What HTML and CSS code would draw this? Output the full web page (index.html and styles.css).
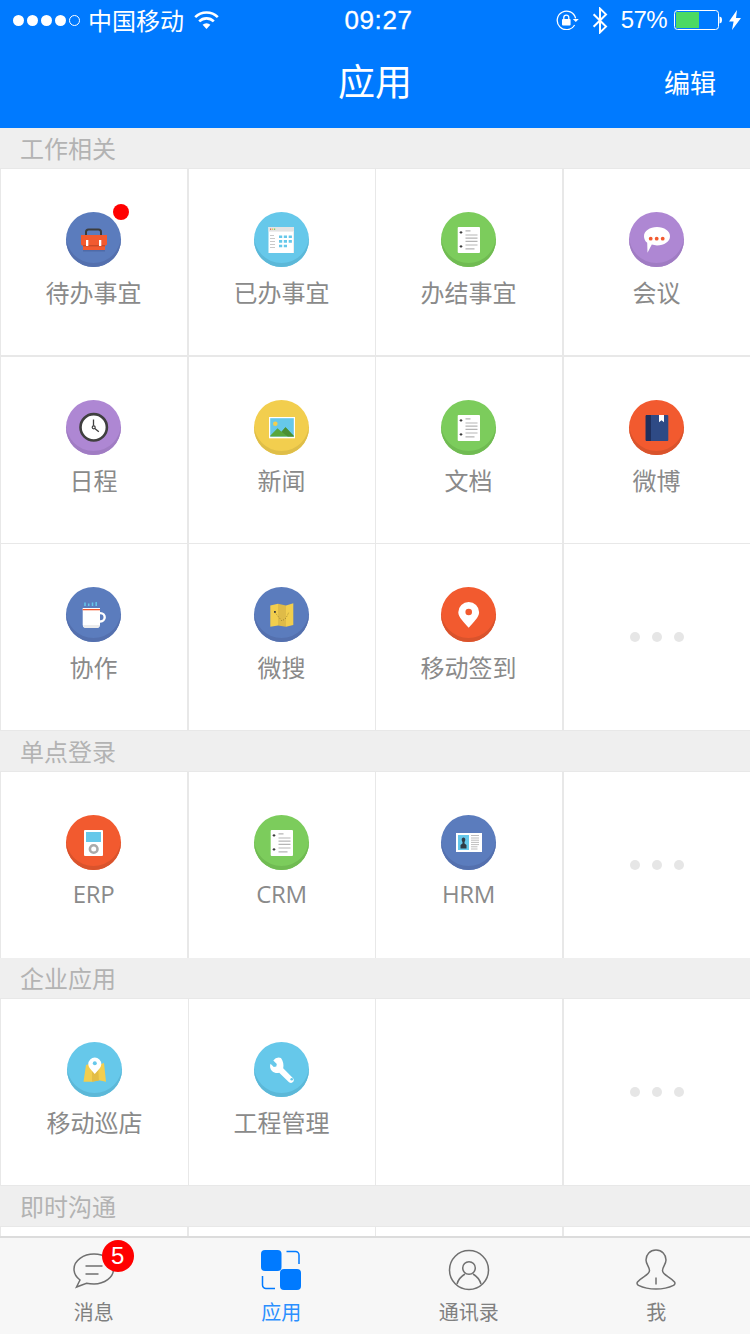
FILE: index.html
```html
<!DOCTYPE html>
<html lang="zh">
<head>
<meta charset="UTF-8">
<title>应用</title>
<link rel="stylesheet" href="styles.css">
</head>
<body>
<svg class="defs">
	<symbol id="doc" viewBox="0 0 55 55">
		<rect x="16.7" y="15" width="22.3" height="26" rx="1" fill="#fff"/>
		<path d="M24.5 18.8h5M24.5 23h12M24.5 26.2h12M24.5 29.4h12M24.5 33h12M24.5 36.8h9" stroke="#b5b5b5" stroke-width="1.2"/>
		<path d="M18.6 20.4h2.8M20 19v2.8M18.6 34.4h2.8M20 33v2.8" stroke="#333" stroke-width="1"/>
	</symbol>
</svg>

<div class="page">
	<header class="topbar">
		<div class="status">
			<div class="status-left">
				<span class="signal"><i></i><i></i><i></i><i></i><i class="off"></i></span>
				<span class="carrier">中国移动</span>
				<svg class="wifi" width="25" height="20" viewBox="0 0 25 20" fill="none" stroke="#fff" stroke-width="2.6">
					<path d="M1.2 7.2a16 16 0 0 1 22.6 0"/>
					<path d="M5.2 11.4a10.4 10.4 0 0 1 14.6 0"/>
					<path d="M12.5 19 8.6 14.8a5.4 5.4 0 0 1 7.8 0z" fill="#fff" stroke="none"/>
				</svg>
			</div>
			<div class="time">09:27</div>
			<div class="status-right">
				<svg class="lock" width="23" height="20" viewBox="0 0 23 20" fill="none" stroke="#fff" stroke-width="1.3">
					<path d="M19.6 8.4A9.3 9.3 0 1 0 18.6 15"/>
					<path d="M16.8 9h6l-3 3z" fill="#fff" stroke="none"/>
					<rect x="6" y="9" width="8.6" height="6.6" rx="1" fill="#fff" stroke="none"/>
					<path d="M7.8 9.4V7.6a2.5 2.5 0 0 1 5 0v1.8"/>
				</svg>
				<svg class="bluetooth" width="16" height="27" viewBox="0 0 16 27" fill="none" stroke="#fff" stroke-width="2">
					<path d="M1.6 7.2 14 19.6 8 25.4V1.6l6 5.800L1.6 19.800"/>
				</svg>
				<span class="percent">57%</span>
				<svg class="battery" width="49" height="20" viewBox="0 0 49 20">
					<rect x="0.5" y="0.5" width="44" height="19" rx="3" fill="none" stroke="#fff"/>
					<rect x="2" y="2" width="23" height="16" fill="#4cd964"/>
					<path d="M45.500 6.500c1.800.3 2.500 1.500 2.500 3.500s-.7 3.200-2.500 3.500z" fill="#fff"/>
				</svg>
				<svg class="bolt" width="12" height="20" viewBox="0 0 12 20">
					<path d="M8 0 0 11.400h4.600L3 20l9-12H7z" fill="#fff"/>
				</svg>
			</div>
		</div>
		<nav class="navbar">
			<span></span>
			<h1 class="nav-title">应用</h1>
			<a class="nav-edit">编辑</a>
		</nav>
	</header>

	<main class="content">
		<div class="section-title">工作相关</div>
		<div class="row">
			<div class="cell">
				<div class="disc disc-blue">
					<span class="red-dot"></span>
					<svg class="glyph" viewBox="0 0 55 55">
						<path d="M20 23.500v-3.500a2.500 2.500 0 0 1 2.500-2.500h10a2.500 2.500 0 0 1 2.500 2.500v3.500" fill="none" stroke="#3c3c3c" stroke-width="2"/>
						<rect x="17" y="35" width="22" height="4.500" fill="#4f6aa8"/>
						<rect x="17" y="33" width="22" height="5" fill="#f25a2f"/>
						<path d="M15 23h26v9.500l-2 1.500H17l-2-1.500z" fill="#f25a2f"/>
						<rect x="17" y="33" width="22" height="1.400" fill="#c94a26"/>
						<rect x="20" y="28" width="2.300" height="6" fill="#fff"/>
						<rect x="33" y="28" width="2.300" height="6" fill="#fff"/>
					</svg>
				</div>
				<span class="cell-label">待办事宜</span>
			</div>
			<div class="cell">
				<div class="disc disc-teal">
					<svg class="glyph" viewBox="0 0 55 55">
						<rect x="14.500" y="15" width="25.500" height="26" fill="#fff"/>
						<rect x="14.500" y="15" width="25.500" height="4.600" fill="#e3e3e3"/>
						<rect x="39" y="19" width="1" height="22" fill="#eee"/>
						<rect x="16" y="16.500" width="1.200" height="1.400" fill="#e2664a"/>
						<rect x="18" y="16.500" width="1.200" height="1.400" fill="#e8c24a"/>
						<rect x="20" y="16.500" width="1.200" height="1.400" fill="#7ccc5c"/>
						<path d="M16 23.500h4M16 26.500h5M16 29.500h5M16 32.500h5M16 35.500h5" stroke="#c9c9c9" stroke-width="1"/>
						<path d="M25 24.800h3.200M29.800 24.800h3.200M34.700 24.800h3.200M25 29.400h3.200M29.800 29.400h3.200M34.700 29.400h3.200M25 34h3.200M29.800 34h3.200" stroke="#66c8ea" stroke-width="2.600"/>
					</svg>
				</div>
				<span class="cell-label">已办事宜</span>
			</div>
			<div class="cell">
				<div class="disc disc-green">
					<svg class="glyph"><use href="#doc"/></svg>
				</div>
				<span class="cell-label">办结事宜</span>
			</div>
			<div class="cell">
				<div class="disc disc-purple">
					<svg class="glyph" viewBox="0 0 55 55">
						<path d="M28 15c7.200 0 13 4 13 9.200S35.200 33.400 28 33.400c-2 0-3.500-.3-5.200-.8L18.500 40.700 18.200 30.800C16 29 15 26.800 15 24.200 15 19 20.800 15 28 15z" fill="#fff"/>
						<circle cx="21.700" cy="26.700" r="1.900" fill="#f25a2f"/>
						<circle cx="27.700" cy="26.700" r="1.900" fill="#f25a2f"/>
						<circle cx="33.700" cy="26.700" r="1.900" fill="#f25a2f"/>
					</svg>
				</div>
				<span class="cell-label">会议</span>
			</div>
		</div>
		<div class="row row-thick">
			<div class="cell">
				<div class="disc disc-purple">
					<svg class="glyph" viewBox="0 0 55 55">
						<circle cx="27.700" cy="27.300" r="13.200" fill="#fff" stroke="#3f3f3f" stroke-width="2.600"/>
						<path d="M27.500 19.500v6.200M28.800 28.400l4 3.400" stroke="#3f3f3f" stroke-width="1.300" fill="none"/>
						<circle cx="27.700" cy="27.300" r="1.500" fill="none" stroke="#3f3f3f" stroke-width="1.200"/>
					</svg>
				</div>
				<span class="cell-label">日程</span>
			</div>
			<div class="cell">
				<div class="disc disc-yellow">
					<svg class="glyph" viewBox="0 0 55 55">
						<rect x="15" y="17" width="26" height="21.300" fill="#fff"/>
						<rect x="16.200" y="18.200" width="23.600" height="18.400" fill="#66c8ea"/>
						<circle cx="21.300" cy="23.700" r="2.300" fill="#f2ce4e"/>
						<path d="M16.200 36.600v-.8l7.300-7.600 4 3.500 4-4.500 8.300 8.800v.6z" fill="#58a63c"/>
						<path d="M27.500 31.700l4-4.500 8.300 8.800v.6h-6z" fill="#4a8f33"/>
					</svg>
				</div>
				<span class="cell-label">新闻</span>
			</div>
			<div class="cell">
				<div class="disc disc-green">
					<svg class="glyph"><use href="#doc"/></svg>
				</div>
				<span class="cell-label">文档</span>
			</div>
			<div class="cell">
				<div class="disc disc-orange">
					<svg class="glyph" viewBox="0 0 55 55">
						<rect x="16.700" y="15" width="22.600" height="26" rx="1" fill="#2e4a85"/>
						<path d="M17.700 15h4.300v26h-4.300a1 1 0 0 1-1-1V16a1 1 0 0 1 1-1z" fill="#1f2f5c"/>
						<path d="M30 15h5v7.300l-2.500-2-2.500 2z" fill="#fff"/>
					</svg>
				</div>
				<span class="cell-label">微博</span>
			</div>
		</div>
		<div class="row row-last">
			<div class="cell">
				<div class="disc disc-blue">
					<svg class="glyph" viewBox="0 0 55 55">
						<path d="M19 15.500v3.500M22.700 16.500v2.500M26.500 15.500v3.500M30.200 15v4" stroke="#66c8ea" stroke-width="1.500"/>
						<circle cx="34.500" cy="30.300" r="4.200" fill="none" stroke="#fff" stroke-width="2.400"/>
						<path d="M16.700 21h17.300v16.500a3.500 3.500 0 0 1-3.500 3.500H20.200a3.500 3.500 0 0 1-3.500-3.500z" fill="#fff"/>
						<path d="M16.700 38h17.300l-.3 0a3.500 3.500 0 0 1-3.200 3H20.200a3.500 3.500 0 0 1-3.200-3z" fill="#ececec"/>
						<rect x="16.700" y="22" width="17.300" height="1.300" fill="#f25a2f"/>
					</svg>
				</div>
				<span class="cell-label">协作</span>
			</div>
			<div class="cell">
				<div class="disc disc-blue">
					<svg class="glyph" viewBox="0 0 55 55">
						<path d="M16.300 18.500 24 16.800v21.700l-7.700 1.200z" fill="#f2ce4e"/>
						<path d="M24 16.800l8 1.700v21.200l-8-1.200z" fill="#dfbb48"/>
						<path d="M32 18.500l7.300-2.200v21.700L32 39.700z" fill="#f2ce4e"/>
						<path d="M21 25.500l4 5 3 3.500 4-3 3-6" fill="none" stroke="#8a7428" stroke-width=".8" stroke-dasharray="1 1.500"/>
						<rect x="20" y="24" width="1.800" height="1.800" fill="#3c3c3c"/>
					</svg>
				</div>
				<span class="cell-label">微搜</span>
			</div>
			<div class="cell">
				<div class="disc disc-orange">
					<svg class="glyph" viewBox="0 0 55 55">
						<path d="M27.700 40.700C23 35 17.300 30.500 17.300 25.200a10.400 10.200 0 0 1 20.800 0c0 5.300-5.700 9.800-10.400 15.500z" fill="#fff"/>
						<circle cx="27.700" cy="25" r="3.300" fill="#f25a2f"/>
					</svg>
				</div>
				<span class="cell-label">移动签到</span>
			</div>
			<div class="cell cell-more"><i></i><i></i><i></i></div>
		</div>

		<div class="section-title">单点登录</div>
		<div class="row">
			<div class="cell">
				<div class="disc disc-orange">
					<svg class="glyph" viewBox="0 0 55 55">
						<rect x="18" y="15" width="19" height="26" rx="1" fill="#fff"/>
						<rect x="20" y="17" width="15" height="10" fill="#66c8ea"/>
						<circle cx="27.700" cy="34" r="3.800" fill="#fff" stroke="#aaa" stroke-width="2.600"/>
					</svg>
				</div>
				<span class="cell-label cell-label-latin">ERP</span>
			</div>
			<div class="cell">
				<div class="disc disc-green">
					<svg class="glyph"><use href="#doc"/></svg>
				</div>
				<span class="cell-label cell-label-latin">CRM</span>
			</div>
			<div class="cell">
				<div class="disc disc-blue">
					<svg class="glyph" viewBox="0 0 55 55">
						<rect x="15" y="18" width="26" height="19" fill="#fff"/>
						<rect x="17" y="20" width="11" height="15" fill="#66c8ea"/>
						<path d="M22.500 22.500c1.200 0 1.800 1 1.800 2.200 0 1-.4 1.700-.8 2.200v1.600l2 1.500v3.500h-6v-3.500l2-1.500v-1.600c-.4-.5-.8-1.200-.8-2.200 0-1.200.6-2.200 1.800-2.200z" fill="#2f3b45"/>
						<path d="M30 20.500h8M30 23h8M30 25.200h8M30 27.400h8M30 29.600h8M30 31.800h6.500M30 34h6.500" stroke="#bdbdbd" stroke-width="1"/>
					</svg>
				</div>
				<span class="cell-label cell-label-latin">HRM</span>
			</div>
			<div class="cell cell-more"><i></i><i></i><i></i></div>
		</div>

		<div class="section-title">企业应用</div>
		<div class="row row-wide row-last">
			<div class="cell">
				<div class="disc disc-teal">
					<svg class="glyph" viewBox="0 0 55 55">
						<path d="M16.500 39.700 19 23l6-2 6 2 6-2 2 18.700-7-1.500-7 1.500z" fill="#f2ce4e"/>
						<path d="M25 21l6 2 1 15.500-7 1.200z" fill="#e3bd45"/>
						<path d="M27.800 32c-2.800-3.400-6.500-6.300-6.500-10a6.500 6.500 0 0 1 13 0c0 3.700-3.700 6.600-6.500 10z" fill="#fff"/>
						<circle cx="27.800" cy="21.300" r="2" fill="#66c8ea"/>
					</svg>
				</div>
				<span class="cell-label">移动巡店</span>
			</div>
			<div class="cell">
				<div class="disc disc-teal">
					<svg class="glyph" viewBox="0 0 55 55">
						<path d="M25.500 16.500a7 7 0 0 0-7.700 2.600l3.500 3.400-.5 2.500-2.500.5-3.300-3.300a7.400 7.400 0 0 0 1.500 7.300c2.300 2.100 5 2.400 7.200 1.700l9.800 9.500c1.500 1 3 .9 4-.1s1.100-2.600.1-3.900l-9.900-9.900c.8-3.400 0-7-2.200-10.300z" fill="#fff" transform="translate(1.500 -.5)"/>
						<circle cx="37.700" cy="37.300" r="1.300" fill="#66c8ea"/>
					</svg>
				</div>
				<span class="cell-label">工程管理</span>
			</div>
			<div class="cell"></div>
			<div class="cell cell-more"><i></i><i></i><i></i></div>
		</div>

		<div class="section-title">即时沟通</div>
		<div class="row">
			<div class="cell"></div>
			<div class="cell"></div>
			<div class="cell"></div>
			<div class="cell"></div>
		</div>
	</main>

	<footer class="tabbar">
		<div class="tab">
			<div class="tab-icon">
				<svg width="42" height="42" viewBox="0 0 42 42" fill="none" stroke="#707070" stroke-width="1.500">
					<path d="M21 5C10.500 5 1 11.500 1 20c0 4.500 2.400 8.300 6 11L3.500 38l10-3.800c2 .5 5 .8 7.500.8 10.500 0 19.500-6.500 19.500-15S31.500 5 21 5z"/>
					<path d="M12.500 17h17M12.500 25h13"/>
				</svg>
				<span class="badge">5</span>
			</div>
			<span class="tab-label">消息</span>
		</div>
		<div class="tab tab-active">
			<div class="tab-icon">
				<svg width="42" height="42" viewBox="0 0 42 42" fill="#007aff">
					<rect x="1" y="1" width="20.500" height="21" rx="4"/>
					<rect x="20" y="20" width="21" height="21" rx="4"/>
					<path d="M26.500 2.500h9a3.500 3.500 0 0 1 3.500 3.500v9M15 39.500H6A3.500 3.500 0 0 1 2.500 36v-9" fill="none" stroke="#007aff" stroke-width="1.500"/>
				</svg>
			</div>
			<span class="tab-label">应用</span>
		</div>
		<div class="tab">
			<div class="tab-icon">
				<svg width="42" height="42" viewBox="0 0 42 42" fill="none" stroke="#707070" stroke-width="1.500">
					<circle cx="21" cy="21" r="19.500"/>
					<circle cx="21" cy="19" r="6.300"/>
					<path d="M9 35c1.500-5.500 5.500-8.500 8-10M33 35c-1.500-5.500-5.500-8.500-8-10"/>
				</svg>
			</div>
			<span class="tab-label">通讯录</span>
		</div>
		<div class="tab">
			<div class="tab-icon">
				<svg width="42" height="42" viewBox="0 0 42 42" fill="none" stroke="#707070" stroke-width="1.500">
					<path d="M21 1c6 0 10 4.500 10 10 0 4-3.500 7-3.500 10.500 0 4.500 7.500 6 12 11.500.8 1 .5 2.500-1 3.300C34 38.500 27 40 21 40S8 38.500 3.500 36.300c-1.500-.8-1.800-2.300-1-3.300 4.500-5.500 12-7 12-11.500C14.500 18 11 15 11 11 11 5.500 15 1 21 1z"/>
					<path d="M21 28.500v7"/>
				</svg>
			</div>
			<span class="tab-label">我</span>
		</div>
	</footer>
</div>
</body>
</html>
```
FILE: styles.css
```css
* {
  box-sizing: border-box;
}

body {
  margin: 0;
  font-family: "Noto Sans CJK SC", "Liberation Sans", sans-serif;
}

.defs {
  display: none;
}

.page {
  width: 750px;
  height: 1334px;
  display: flex;
  flex-direction: column;
  overflow: hidden;
  background: #fff;
}

/* top blue bar */
.topbar {
  height: 128px;
  flex: none;
  background: #007aff;
  color: #fff;
}

.status {
  height: 40px;
  padding: 0 9px 0 13px;
  display: flex;
  align-items: center;
  justify-content: space-between;
}

.status-left,
.status-right {
  width: 300px;
  display: flex;
  align-items: center;
}

.status-right {
  justify-content: flex-end;
}

.signal {
  display: flex;
  gap: 3px;
}

.signal i {
  width: 11px;
  height: 11px;
  border-radius: 50%;
  background: #fff;
}

.signal i.off {
  background: none;
  border: 1px solid #fff;
}

.carrier {
  margin-left: 8px;
  font-size: 24px;
  line-height: 40px;
}

.wifi {
  margin-left: 10px;
}

.time {
  margin-left: 3px;
  font-family: "Liberation Sans", sans-serif;
  font-size: 26px;
  letter-spacing: 0.6px;
  line-height: 40px;
  -webkit-text-stroke: 0.3px #fff;
}

.bluetooth {
  margin-left: 13px;
}

.percent {
  margin-left: 13px;
  font-family: "Liberation Sans", sans-serif;
  font-size: 24px;
  letter-spacing: -0.6px;
  line-height: 40px;
}

.battery {
  margin-left: 7px;
}

.bolt {
  margin-left: 6px;
}

.navbar {
  height: 88px;
  display: grid;
  grid-template-columns: 1fr auto 1fr;
  align-items: start;
}

.nav-title {
  margin: 0;
  font-size: 37px;
  font-weight: 400;
  line-height: 80px;
}

.nav-edit {
  padding-right: 34px;
  font-size: 26px;
  line-height: 84px;
  text-align: right;
}

/* grid */
.content {
  flex: 1;
  min-height: 0;
  overflow: hidden;
  background: #efefef;
}

.section-title {
  height: 40px;
  padding-left: 20px;
  font-size: 24px;
  line-height: 40px;
  color: #b3b3b3;
}

.row {
  display: grid;
  grid-template-columns: 187px 188px 187px 188px;
  border-top: 1px solid #e8e8e8;
}

.row-thick {
  border-top-width: 2px;
}

.row-last {
  border-bottom: 1px solid #e8e8e8;
}

.row-wide {
  grid-template-columns: 188px 187px 187px 188px;
}

.cell {
  height: 186px;
  box-sizing: content-box;
  padding-right: 1px;
  display: flex;
  flex-direction: column;
  align-items: center;
  background: #fff;
  border-left: 1px solid #e8e8e8;
}

.cell:nth-child(even) {
  border-left-width: 2px;
}

.row-wide .cell:nth-child(2) {
  border-left-width: 1px;
}

.row-wide .cell:first-child {
  padding-right: 0;
}

.cell-more {
  padding-right: 0;
  flex-direction: row;
  justify-content: center;
  gap: 12px;
}

.cell-more i {
  width: 10px;
  height: 10px;
  border-radius: 50%;
  background: #e6e6e6;
}

.disc {
  position: relative;
  width: 55px;
  height: 55px;
  margin-top: 43px;
  border-radius: 50%;
}

.glyph {
  display: block;
  width: 55px;
  height: 55px;
}

.disc-blue {
  background: #5b7cbd;
  box-shadow: inset 0 -4px 0 #5470ae;
}

.disc-teal {
  background: #66c8ea;
  box-shadow: inset 0 -4px 0 #5cb8d8;
}

.disc-green {
  background: #7ccc5c;
  box-shadow: inset 0 -4px 0 #70bb52;
}

.disc-purple {
  background: #ae87d3;
  box-shadow: inset 0 -4px 0 #a07cc3;
}

.disc-yellow {
  background: #f2ce4e;
  box-shadow: inset 0 -4px 0 #dfbe48;
}

.disc-orange {
  background: #f25a2f;
  box-shadow: inset 0 -4px 0 #d9532c;
}

.red-dot {
  position: absolute;
  left: 47px;
  top: -8px;
  width: 16px;
  height: 16px;
  border-radius: 50%;
  background: #f00;
}

.cell-label {
  margin-top: 11px;
  font-size: 24px;
  line-height: 28px;
  color: #8a8a8a;
}

.cell-label-latin {
  margin-top: 10px;
  font-family: "Open Sans", sans-serif;
  letter-spacing: -0.3px;
}

/* tabs */
.tabbar {
  height: 98px;
  flex: none;
  display: flex;
  background: #f7f7f7;
  border-top: 2px solid #dcdcdc;
}

.tab {
  flex: 1;
  padding-top: 11px;
  display: flex;
  flex-direction: column;
  align-items: center;
}

.tab-icon {
  width: 42px;
  height: 42px;
  position: relative;
}

.tab-icon svg {
  display: block;
}

.badge {
  position: absolute;
  left: 29px;
  top: -9px;
  width: 32px;
  height: 32px;
  border-radius: 50%;
  background: #f00;
  color: #fff;
  font-family: "Liberation Sans", sans-serif;
  font-size: 24px;
  line-height: 32px;
  text-align: center;
}

.tab-label {
  margin-top: 9px;
  font-size: 20px;
  line-height: 24px;
  color: #808080;
}

.tab-active .tab-label {
  color: #2b8fff;
}
```
